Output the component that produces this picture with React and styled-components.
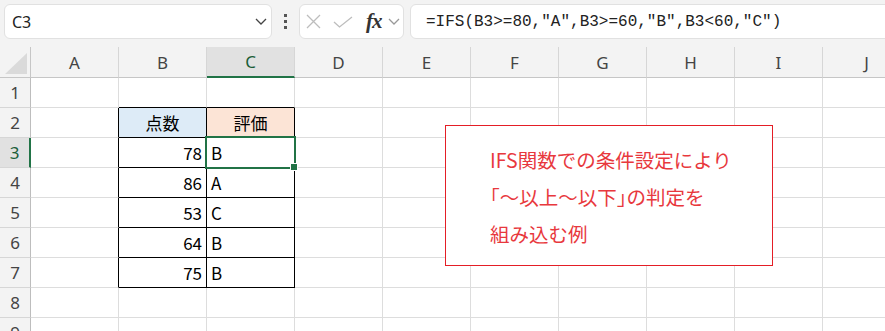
import React from 'react';
import styled, { createGlobalStyle } from 'styled-components';

const GREEN = '#217346';

const GlobalStyle = createGlobalStyle`
  html, body {
    margin: 0;
    padding: 0;
    background: #fff;
  }
  body {
    overflow: hidden;
  }
`;

const Page = styled.div`
  width: 885px;
  height: 331px;
  overflow: hidden;
  background: #fff;
  font-family: "Noto Sans", "Noto Sans CJK JP", sans-serif;
`;

const Toolbar = styled.div`
  display: flex;
  align-items: flex-start;
  height: 47px;
  box-sizing: border-box;
  padding: 4px 0 0 4px;
  background: #f3f3f3;
`;

const Box = styled.div`
  display: flex;
  align-items: center;
  height: 35px;
  box-sizing: border-box;
  background: #fff;
  border: 1px solid #e1e1e1;
  border-radius: 6px;
  flex-shrink: 0;
`;

const NameBox = styled(Box)`
  width: 268px;
  justify-content: space-between;
  padding: 0 4px 0 7px;
  font-size: 16px;
  color: #222;
`;

const MoreButton = styled.div`
  width: 27px;
  height: 35px;
  display: flex;
  flex-direction: column;
  align-items: center;
  justify-content: center;
  gap: 3px;
  flex-shrink: 0;
`;

const Dot = styled.span`
  width: 3px;
  height: 3px;
  background: #555;
`;

const FxBox = styled(Box)`
  width: 105px;
  padding-left: 6px;
`;

const FxLabel = styled.span`
  font-family: "Liberation Serif", "DejaVu Serif", serif;
  font-style: italic;
  font-weight: bold;
  font-size: 21px;
  color: #333;
  margin-left: 13px;
  line-height: 1;
  letter-spacing: -1px;
`;

const IconSlot = styled.span`
  display: flex;
  margin-left: ${p => p.$gap || 0}px;
`;

const FormulaBox = styled(Box)`
  width: 520px;
  margin-left: 6px;
  padding-left: 15px;
  font-family: "Liberation Mono", monospace;
  font-size: 16px;
  color: #222;
  white-space: pre;
`;

const Sheet = styled.div`
  position: relative;
  display: grid;
  grid-template-columns: 31px repeat(10, 88px);
  grid-template-rows: 31px;
  grid-auto-rows: 30px;
`;

const Corner = styled.div`
  display: flex;
  align-items: flex-end;
  justify-content: flex-end;
  padding: 0 3px 3px 0;
  box-sizing: border-box;
  background: #f3f3f3;
  border-right: 1px solid #c6c6c6;
  border-bottom: 1px solid #c6c6c6;
`;

const Triangle = styled.span`
  width: 22px;
  height: 21px;
  background: #dadada;
  clip-path: polygon(100% 0, 100% 100%, 0 100%);
`;

const ColHeader = styled.div`
  display: flex;
  align-items: center;
  justify-content: center;
  box-sizing: border-box;
  background: ${p => (p.$active ? '#e1e1e1' : '#f3f3f3')};
  border-right: 1px solid #d6d6d6;
  border-bottom: ${p => (p.$active ? `2px solid ${GREEN}` : '1px solid #c6c6c6')};
  color: ${p => (p.$active ? '#1b5e38' : '#444')};
  font-size: 17px;
`;

const RowHeader = styled.div`
  display: flex;
  align-items: center;
  justify-content: center;
  box-sizing: border-box;
  background: ${p => (p.$active ? '#e1e1e1' : '#f3f3f3')};
  border-right: ${p => (p.$active ? `2px solid ${GREEN}` : '1px solid #bdbdbd')};
  border-bottom: 1px solid #d6d6d6;
  color: ${p => (p.$active ? '#1b5e38' : '#444')};
  font-size: 17px;
`;

const Cell = styled.div`
  display: flex;
  align-items: center;
  justify-content: ${p => p.$align};
  box-sizing: border-box;
  padding: 0 4px;
  background: ${p => p.$fill || '#fff'};
  border-right: 1px solid ${p => (p.$edgeR ? '#000' : '#dddddd')};
  border-bottom: 1px solid ${p => (p.$edgeB ? '#000' : '#dddddd')};
  font-family: "Noto Sans CJK JP", "Noto Sans", sans-serif;
  font-size: 17px;
  color: #000;
`;

const Selection = styled.div`
  position: absolute;
  left: 205px;
  top: 89px;
  width: 91px;
  height: 33px;
  box-sizing: border-box;
  border: 2px solid ${GREEN};
  pointer-events: none;
`;

const Handle = styled.span`
  position: absolute;
  right: -4px;
  bottom: -4px;
  width: 6px;
  height: 6px;
  background: ${GREEN};
  border: 1px solid #fff;
`;

const Note = styled.div`
  position: absolute;
  left: 445px;
  top: 78px;
  width: 328px;
  height: 141px;
  box-sizing: border-box;
  padding: 15px 0 0 44px;
  background: #fff;
  border: 1px solid #e41e26;
  color: #e8383d;
  font-family: "Noto Sans CJK JP", sans-serif;
  font-size: 19.5px;
  line-height: 37px;
`;

const Bracket = styled.span`
  font-feature-settings: "halt";
`;

const COLS = ['A', 'B', 'C', 'D', 'E', 'F', 'G', 'H', 'I', 'J'];
const ROWS = [1, 2, 3, 4, 5, 6, 7, 8, 9];

const DATA = {
  B2: { v: '点数', align: 'center', fill: '#ddebf7' },
  C2: { v: '評価', align: 'center', fill: '#fce4d6' },
  B3: { v: '78', align: 'flex-end' },
  C3: { v: 'B', align: 'flex-start' },
  B4: { v: '86', align: 'flex-end' },
  C4: { v: 'A', align: 'flex-start' },
  B5: { v: '53', align: 'flex-end' },
  C5: { v: 'C', align: 'flex-start' },
  B6: { v: '64', align: 'flex-end' },
  C6: { v: 'B', align: 'flex-start' },
  B7: { v: '75', align: 'flex-end' },
  C7: { v: 'B', align: 'flex-start' },
};

const inTable = (c, r) => (c === 'B' || c === 'C') && r >= 2 && r <= 7;

const Chevron = ({ color = '#444', w = 12 }) => (
  <svg width={w} height="7" viewBox="0 0 12 7">
    <path d="M1 1 L6 6 L11 1" fill="none" stroke={color} strokeWidth="1.3" />
  </svg>
);

function App() {
  return (
    <Page>
      <GlobalStyle />
      <Toolbar>
        <NameBox>
          <span>C3</span>
          <Chevron />
        </NameBox>
        <MoreButton>
          <Dot />
          <Dot />
          <Dot />
        </MoreButton>
        <FxBox>
          <IconSlot>
            <svg width="15" height="15" viewBox="0 0 15 15">
              <path d="M1 1 L14 14 M14 1 L1 14" stroke="#bdbdbd" strokeWidth="1.3" />
            </svg>
          </IconSlot>
          <IconSlot $gap={12}>
            <svg width="20" height="12" viewBox="0 0 20 12">
              <path d="M1 6 L6.5 11 L19 1" fill="none" stroke="#bdbdbd" strokeWidth="1.3" />
            </svg>
          </IconSlot>
          <FxLabel>fx</FxLabel>
          <IconSlot $gap={6}>
            <Chevron color="#999" />
          </IconSlot>
        </FxBox>
        <FormulaBox>=IFS(B3&gt;=80,"A",B3&gt;=60,"B",B3&lt;60,"C")</FormulaBox>
      </Toolbar>

      <Sheet>
        <Corner>
          <Triangle />
        </Corner>
        {COLS.map(c => (
          <ColHeader key={c} $active={c === 'C'}>
            {c}
          </ColHeader>
        ))}
        {ROWS.map(r => (
          <React.Fragment key={r}>
            <RowHeader $active={r === 3}>{r}</RowHeader>
            {COLS.map(c => {
              const d = DATA[c + r] || {};
              const edgeR = inTable(c, r) || (c === 'A' && inTable('B', r));
              const edgeB = inTable(c, r) || (r === 1 && inTable(c, 2));
              return (
                <Cell
                  key={c + r}
                  $align={d.align || 'flex-start'}
                  $fill={d.fill}
                  $edgeR={edgeR}
                  $edgeB={edgeB}
                >
                  {d.v}
                </Cell>
              );
            })}
          </React.Fragment>
        ))}

        <Selection>
          <Handle />
        </Selection>

        <Note lang="ja">
          <div>IFS関数での条件設定により</div>
          <div>
            <Bracket>「</Bracket>～以上～以下<Bracket>」</Bracket>の判定を
          </div>
          <div>組み込む例</div>
        </Note>
      </Sheet>
    </Page>
  );
}

export default App;
